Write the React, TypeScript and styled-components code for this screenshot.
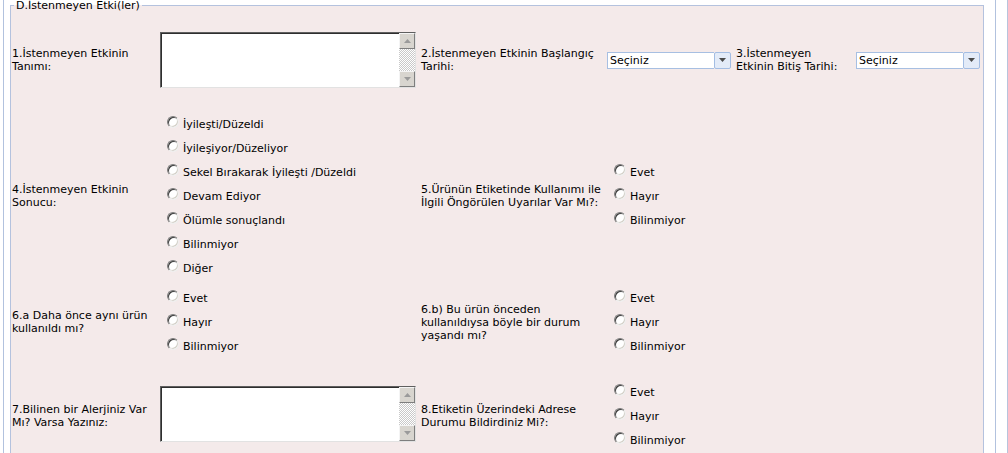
import React from 'react';
import styled, { createGlobalStyle } from 'styled-components';

const GlobalStyle = createGlobalStyle`
  html, body {
    margin: 0;
    padding: 0;
    background: #ffffff;
    overflow: hidden;
  }
  body {
    font-family: 'DejaVu Sans', Verdana, sans-serif;
    font-size: 11px;
    color: #000000;
  }
`;

const Page = styled.div`
  width: 1008px;
  height: 453px;
  box-sizing: border-box;
  padding: 0 11px 0 3px;
  border-right: 1px solid #b8c4dc;
  overflow: hidden;
`;

const Frame = styled.div`
  height: 100%;
  border-left: 1px solid #b2c2de;
  border-right: 1px solid #b2c2de;
  padding: 0 11px 0 6px;
`;

const Fieldset = styled.fieldset`
  margin: 0;
  padding: 21px 0 40px;
  min-width: 0;
  border: 1px solid #b4c2de;
  background: #f4eaea;
`;

const Legend = styled.legend`
  margin-left: 3px;
  padding: 0 2px;
  font-size: 11px;
  line-height: 11px;
`;

const Row = styled.div<{ $gap: number }>`
  display: grid;
  grid-template-columns: 149px 260px 187px 128px 121px 127px;
  align-items: center;
  margin-top: ${(p) => p.$gap}px;
`;

const Label = styled.div`
  padding-left: 1px;
  line-height: 13px;
  white-space: nowrap;
`;

const TextBox = styled.div<{ $lift?: number }>`
  display: flex;
  width: 256px;
  height: 56px;
  box-sizing: border-box;
  margin-bottom: ${(p) => p.$lift ?? 0}px;
  border: 1px solid;
  border-color: #5f5f5f #e2e2e2 #e2e2e2 #5f5f5f;
  box-shadow: inset 1px 1px 0 #2e2e2e;
  background: #ffffff;
`;

const TextInput = styled.textarea`
  flex: 1;
  margin: 0;
  padding: 1px 2px;
  border: none;
  outline: none;
  resize: none;
  overflow: hidden;
  background: transparent;
  font: inherit;
`;

const ScrollBar = styled.div`
  display: flex;
  flex-direction: column;
  width: 16px;
`;

const ScrollButton = styled.div`
  display: flex;
  align-items: center;
  justify-content: center;
  height: 16px;
  box-sizing: border-box;
  border: 1px solid;
  border-color: #f4f4f4 #7e7e7e #7e7e7e #f4f4f4;
  background: #d8d5cf;
`;

const ScrollTrack = styled.div`
  flex: 1;
  background-image: conic-gradient(#c9c9c9 25%, #ffffff 0 50%, #c9c9c9 0 75%, #ffffff 0);
  background-size: 2px 2px;
`;

const Select = styled.div`
  display: flex;
  width: 124px;
  height: 17px;
`;

const SelectValue = styled.div`
  flex: 1;
  box-sizing: border-box;
  border: 1px solid #a7bfe2;
  border-right: none;
  background: #ffffff;
  padding-left: 2px;
  line-height: 15px;
`;

const SelectButton = styled.div`
  display: flex;
  align-items: center;
  justify-content: center;
  width: 17px;
  box-sizing: border-box;
  border: 1px solid #a3bde3;
  border-radius: 2px;
  background: #e3ebf8;
`;

const RadioList = styled.div`
  display: flex;
  flex-direction: column;
  padding-left: 7px;
`;

const RadioItem = styled.label`
  display: flex;
  align-items: center;
  height: 24px;
  white-space: nowrap;
`;

const RadioInput = styled.input`
  appearance: none;
  flex: none;
  width: 12px;
  height: 12px;
  margin: -5px 4px 0 0;
  box-sizing: border-box;
  border: 1px solid;
  border-color: #7b7b7b #eeeeee #eeeeee #7b7b7b;
  border-radius: 50%;
  background: #ffffff;
  box-shadow: inset 1px 1px 0 #3c3c3c, inset -1px -1px 0 #d4d0c8;
`;

const Arrow = ({ up, color }: { up?: boolean; color: string }) => (
  <svg width="7" height="4" viewBox="0 0 7 4" style={up ? { transform: 'rotate(180deg)' } : undefined}>
    <path d="M0 0h7L3.5 4z" fill={color} />
  </svg>
);

const TextArea = ({ lift }: { lift?: number }) => (
  <TextBox $lift={lift}>
    <TextInput />
    <ScrollBar>
      <ScrollButton>
        <Arrow up color="#9a9a9a" />
      </ScrollButton>
      <ScrollTrack />
      <ScrollButton>
        <Arrow color="#9a9a9a" />
      </ScrollButton>
    </ScrollBar>
  </TextBox>
);

const DateSelect = () => (
  <Select>
    <SelectValue>Seçiniz</SelectValue>
    <SelectButton>
      <Arrow color="#4a4a4a" />
    </SelectButton>
  </Select>
);

const Radios = ({ name, options }: { name: string; options: string[] }) => (
  <RadioList>
    {options.map((o) => (
      <RadioItem key={o}>
        <RadioInput type="radio" name={name} />
        {o}
      </RadioItem>
    ))}
  </RadioList>
);

const Lines = ({ lines }: { lines: string[] }) => (
  <Label>
    {lines.map((l, i) => (
      <React.Fragment key={i}>
        {i > 0 && <br />}
        {l}
      </React.Fragment>
    ))}
  </Label>
);

const yesNo = ['Evet', 'Hayır', 'Bilinmiyor'];
const outcomes = [
  'İyileşti/Düzeldi',
  'İyileşiyor/Düzeliyor',
  'Sekel Bırakarak İyileşti /Düzeldi',
  'Devam Ediyor',
  'Ölümle sonuçlandı',
  'Bilinmiyor',
  'Diğer',
];

export default function App() {
  return (
    <>
      <GlobalStyle />
      <Page>
        <Frame>
          <Fieldset>
            <Legend>D.İstenmeyen Etki(ler)</Legend>
            <Row $gap={0}>
              <Lines lines={['1.İstenmeyen Etkinin', 'Tanımı:']} />
              <TextArea />
              <Lines lines={['2.İstenmeyen Etkinin Başlangıç', 'Tarihi:']} />
              <DateSelect />
              <Lines lines={['3.İstenmeyen', 'Etkinin Bitiş Tarihi:']} />
              <DateSelect />
            </Row>
            <Row $gap={24}>
              <Lines lines={['4.İstenmeyen Etkinin', 'Sonucu:']} />
              <Radios name="sonuc" options={outcomes} />
              <Lines lines={['5.Ürünün Etiketinde Kullanımı ile', 'İlgili Öngörülen Uyarılar Var Mı?:']} />
              <Radios name="uyari" options={yesNo} />
            </Row>
            <Row $gap={6}>
              <Lines lines={['6.a Daha önce aynı ürün', 'kullanıldı mı?']} />
              <Radios name="once" options={yesNo} />
              <Lines lines={['6.b) Bu ürün önceden', 'kullanıldıysa böyle bir durum', 'yaşandı mı?']} />
              <Radios name="durum" options={yesNo} />
            </Row>
            <Row $gap={22}>
              <Lines lines={['7.Bilinen bir Alerjiniz Var', 'Mı? Varsa Yazınız:']} />
              <TextArea lift={4} />
              <Lines lines={['8.Etiketin Üzerindeki Adrese', 'Durumu Bildirdiniz Mi?:']} />
              <Radios name="adres" options={yesNo} />
            </Row>
          </Fieldset>
        </Frame>
      </Page>
    </>
  );
}
